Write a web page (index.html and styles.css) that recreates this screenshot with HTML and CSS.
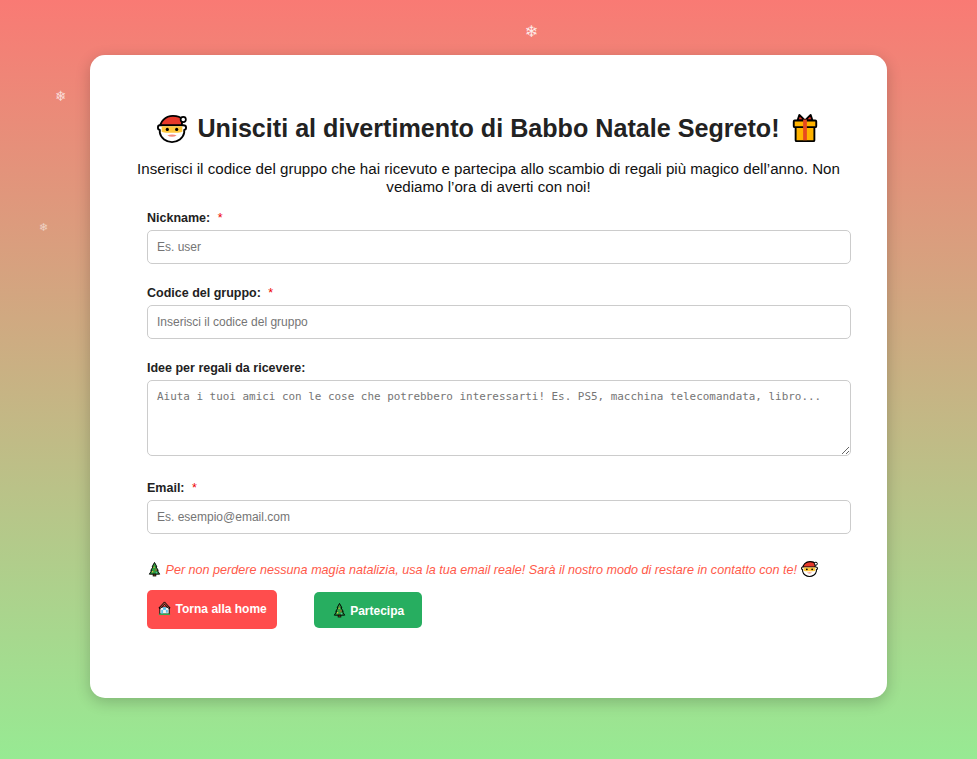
FILE: index.html
```html
<!DOCTYPE html>
<html lang="it">

<head>
    <meta charset="UTF-8">
    <title>Babbo Natale Segreto</title>
    <link rel="stylesheet" href="styles.css">
</head>

<body>
    <svg class="defs" width="0" height="0">
        <symbol id="santa" viewBox="0 0 32 32">
            <path d="M3 17C3 9 9 3 17 3c5 0 8 1 10 4l-1 10z" fill="#e8392b" stroke="#000" stroke-width="2" stroke-linejoin="round"/>
            <circle cx="28" cy="7" r="2.8" fill="#fff" stroke="#000" stroke-width="1.8"/>
            <path d="M3 13h25c2 0 3 1 3 2.500s-1 2.500-2 2.500v3c-1 6-7 10-13 10S4 27 3 21v-3c-1.500 0-2-1-2-2.500S2 13 3 13z" fill="#fff" stroke="#000" stroke-width="2" stroke-linejoin="round"/>
            <path d="M5 14h22v6c-2 1-4 1-6 1h-10c-2 0-4 0-6-1z" fill="#ffc83d"/>
            <circle cx="11" cy="17.500" r="1.700" fill="#000"/>
            <circle cx="21" cy="17.500" r="1.700" fill="#000"/>
            <path d="M11 24c3 1.800 7 1.800 10 0-3-1.400-7-1.400-10 0z" fill="#f58a7a"/>
        </symbol>
        <symbol id="gift" viewBox="0 0 32 32">
            <path d="M16 8 10 2 8 8zM16 8l6-6 2 6z" fill="#e8392b" stroke="#000" stroke-width="2" stroke-linejoin="round"/>
            <path d="M6 14h20v15a1 1 0 0 1-1 1H7a1 1 0 0 1-1-1z" fill="#ffb300" stroke="#000" stroke-width="2"/>
            <rect x="4" y="8" width="24" height="7" rx="1" fill="#ffb300" stroke="#000" stroke-width="2"/>
            <rect x="14" y="7" width="4" height="22" fill="#e8491f"/>
        </symbol>
        <symbol id="tree" viewBox="0 0 32 32">
            <path d="M16 2 21 11h-2l5 8h-2l5 8H5l5-8H8l5-8h-2z" fill="#2f9e3f" stroke="#000" stroke-width="2" stroke-linejoin="round"/>
            <rect x="13" y="27" width="6" height="4" fill="#7a4a1e" stroke="#000" stroke-width="1.500"/>
            <circle cx="15" cy="12" r="1.500" fill="#ffc83d"/>
            <circle cx="19" cy="18" r="1.500" fill="#e8392b"/>
            <circle cx="12" cy="22" r="1.500" fill="#ffc83d"/>
            <circle cx="20" cy="24" r="1.300" fill="#6ec6ff"/>
        </symbol>
        <symbol id="house" viewBox="0 0 32 32">
            <path d="M6 14h20v15H6z" fill="#f4f4f4" stroke="#000" stroke-width="2"/>
            <path d="M4 16 16 3l12 13-3 1-9-9-9 9z" fill="#b5533c" stroke="#000" stroke-width="2" stroke-linejoin="round"/>
            <rect x="13" y="14" width="6" height="6" fill="#5fc3e8"/>
            <rect x="9" y="20" width="4" height="9" fill="#5fc3e8"/>
            <rect x="19" y="20" width="4" height="6" fill="#5fc3e8"/>
            <rect x="4" y="28" width="24" height="3" fill="#2fa84f"/>
        </symbol>
    </svg>

    <span class="snow snow-1">❄</span>
    <span class="snow snow-2">❄</span>
    <span class="snow snow-3">❄</span>

    <div class="card">
        <h1 class="title">
            <svg class="emoji-big"><use href="#santa"></use></svg>
            Unisciti al divertimento di Babbo Natale Segreto!
            <svg class="emoji-big"><use href="#gift"></use></svg>
        </h1>
        <p class="intro">Inserisci il codice del gruppo che hai ricevuto e partecipa allo scambio di regali più magico dell’anno. Non vediamo l’ora di averti con noi!</p>

        <form class="join-form">
            <div class="field">
                <label class="field-label" for="nickname">Nickname: <span class="req">*</span></label>
                <input class="field-input" id="nickname" type="text" placeholder="Es. user">
            </div>
            <div class="field">
                <label class="field-label" for="code">Codice del gruppo: <span class="req">*</span></label>
                <input class="field-input" id="code" type="text" placeholder="Inserisci il codice del gruppo">
            </div>
            <div class="field field-tall">
                <label class="field-label" for="ideas">Idee per regali da ricevere:</label>
                <textarea class="field-input field-area" id="ideas" placeholder="Aiuta i tuoi amici con le cose che potrebbero interessarti! Es. PS5, macchina telecomandata, libro..."></textarea>
            </div>
            <div class="field">
                <label class="field-label" for="email">Email: <span class="req">*</span></label>
                <input class="field-input" id="email" type="email" placeholder="Es. esempio@email.com">
            </div>
            <p class="hint">
                <svg class="emoji"><use href="#tree"></use></svg>
                Per non perdere nessuna magia natalizia, usa la tua email reale! Sarà il nostro modo di restare in contatto con te!
                <svg class="emoji emoji-end"><use href="#santa"></use></svg>
            </p>
            <div class="actions">
                <a class="btn btn-home" href="#"><svg class="emoji"><use href="#house"></use></svg> Torna alla home</a>
                <button class="btn btn-join" type="button"><svg class="emoji"><use href="#tree"></use></svg> Partecipa</button>
            </div>
        </form>
    </div>
</body>

</html>
```

FILE: styles.css
```css
* {
    box-sizing: border-box;
}

body {
    margin: 0;
    min-height: 759px;
    padding: 55px 90px 61px;
    background: linear-gradient(#f97a74, #97ea93);
    font-family: "Liberation Sans", Arial, sans-serif;
    color: #222;
    overflow: hidden;
}

.defs {
    position: absolute;
}

.snow {
    position: absolute;
    font-family: "DejaVu Sans", sans-serif;
    color: #fff;
    line-height: 1;
}

.snow-1 {
    left: 525px;
    top: 24px;
    font-size: 16px;
    opacity: 0.85;
}

.snow-2 {
    left: 55px;
    top: 89px;
    font-size: 14px;
    opacity: 0.7;
}

.snow-3 {
    left: 39px;
    top: 222px;
    font-size: 11px;
    opacity: 0.55;
}

.card {
    height: 643px;
    padding: 56px 40px 0;
    background: #fff;
    border-radius: 15px;
    box-shadow: 0 4px 15px rgba(0, 0, 0, 0.2);
}

.title {
    display: flex;
    align-items: center;
    justify-content: center;
    gap: 10px;
    margin: 0 0 15px;
    height: 34px;
    font-size: 25.13px;
    color: #222;
    white-space: nowrap;
}

.emoji-big {
    width: 30px;
    height: 30px;
    flex: none;
}

.emoji {
    width: 15px;
    height: 16px;
    vertical-align: -3px;
}

.emoji-end {
    width: 17px;
    height: 17px;
    margin-left: 1px;
}

.intro {
    margin: 0 0 15px;
    font-size: 15.13px;
    line-height: 18px;
    text-align: center;
    color: #111;
}

.join-form {
    margin: 0 17px;
}

.field {
    margin-bottom: 22px;
}

.field-tall {
    margin-bottom: 25px;
}

.field-label {
    display: block;
    height: 14px;
    margin-bottom: 5px;
    font-size: 12.5px;
    line-height: 14px;
    font-weight: bold;
    color: #222;
}

.req {
    margin-left: 4px;
    color: #e00;
    font-weight: normal;
}

.field-input {
    display: block;
    box-sizing: content-box;
    width: 100%;
    height: 14px;
    padding: 9px 10px 9px 9px;
    border: 1px solid #ccc;
    border-radius: 5px;
    background: #fff;
    font-family: "Liberation Sans", Arial, sans-serif;
    font-size: 12px;
}

.field-area {
    height: 56px;
    font-family: "DejaVu Sans Mono", monospace;
    font-size: 10.93px;
    white-space: nowrap;
}

.field-input::placeholder {
    color: #757575;
}

.hint {
    margin: 26px 0 11px;
    font-size: 12.6px;
    line-height: 18px;
    font-style: italic;
    color: #ff5a4a;
    white-space: nowrap;
}

.actions {
    display: flex;
    align-items: center;
    gap: 37px;
}

.btn {
    display: block;
    border: 0;
    border-radius: 5px;
    color: #fff;
    font-family: "Liberation Sans", Arial, sans-serif;
    font-size: 12px;
    font-weight: bold;
    text-decoration: none;
    text-align: center;
}

.btn-home {
    width: 130px;
    height: 39px;
    line-height: 39px;
    background: #ff4d4d;
}

.btn-join {
    width: 108px;
    height: 36px;
    background: #27ae60;
}
```
